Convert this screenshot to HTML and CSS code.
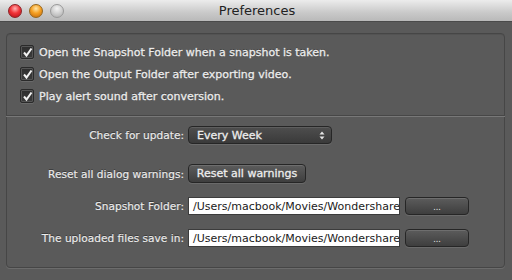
FILE: index.html
```html
<!DOCTYPE html>
<html lang="en">
<head>
  <meta charset="UTF-8">
  <title>Preferences</title>
  <link rel="stylesheet" href="styles.css">
</head>
<body>

<div class="window">
  <div class="titlebar">
    <div class="lights">
      <span class="light close"></span>
      <span class="light minimize"></span>
      <span class="light zoom"></span>
    </div>
    <div class="title">Preferences</div>
  </div>

  <div class="panel">
    <div class="checks">
      <label class="check-row">
        <span class="checkbox"><svg width="11" height="11" viewBox="0 0 11 11"><path d="M2 5.5 L4.5 8.5 L9.5 1.5" fill="none" stroke="#f2f2f2" stroke-width="2"/></svg></span>
        Open the Snapshot Folder when a snapshot is taken.
      </label>
      <label class="check-row">
        <span class="checkbox"><svg width="11" height="11" viewBox="0 0 11 11"><path d="M2 5.5 L4.5 8.5 L9.5 1.5" fill="none" stroke="#f2f2f2" stroke-width="2"/></svg></span>
        Open the Output Folder after exporting video.
      </label>
      <label class="check-row">
        <span class="checkbox"><svg width="11" height="11" viewBox="0 0 11 11"><path d="M2 5.5 L4.5 8.5 L9.5 1.5" fill="none" stroke="#f2f2f2" stroke-width="2"/></svg></span>
        Play alert sound after conversion.
      </label>
    </div>

    <div class="separator"></div>

    <div class="form">
      <div class="form-row row-update">
        <span class="label">Check for update:</span>
        <div class="select">
          <span>Every Week</span>
          <svg class="arrows" width="6" height="9" viewBox="0 0 6 9">
            <path d="M0.5 3.5 L3 0.5 L5.5 3.5 Z M0.5 5.5 L3 8.5 L5.5 5.5 Z" fill="#e6e6e6"/>
          </svg>
        </div>
      </div>

      <div class="form-row row-reset">
        <span class="label">Reset all dialog warnings:</span>
        <button class="btn reset-btn">Reset all warnings</button>
      </div>

      <div class="form-row row-path">
        <span class="label">Snapshot Folder:</span>
        <div class="path-input">/Users/macbook/Movies/Wondershare</div>
        <button class="btn browse-btn">...</button>
      </div>

      <div class="form-row row-path">
        <span class="label">The uploaded files save in:</span>
        <div class="path-input">/Users/macbook/Movies/Wondershare</div>
        <button class="btn browse-btn">...</button>
      </div>
    </div>
  </div>
</div>

</body>
</html>
```

FILE: styles.css
```css
body {
  margin: 0;
  background-color: #5a5a5a;
  font-family: 'DejaVu Sans', 'Noto Sans', sans-serif;
  overflow: hidden;
}

.window {
  width: 512px;
  height: 280px;
  background-color: #5a5a5a;
}

/* title bar */
.titlebar {
  height: 21px;
  position: relative;
  background: linear-gradient(#ececec, #c9c9c9 60%, #b9b9b9);
  border-bottom: 1px solid #4a4a4a;
  display: flex;
  align-items: center;
  justify-content: center;
}

.lights {
  position: absolute;
  left: 8px;
  top: 4px;
  display: flex;
  gap: 7px;
}

.light {
  width: 14px;
  height: 14px;
  border-radius: 50%;
  box-sizing: border-box;
}

.close {
  background: radial-gradient(circle at 50% 30%, #ffb3b3 0, #f2353a 45%, #b10d14 100%);
  border: 1px solid #8d2226;
}

.minimize {
  background: radial-gradient(circle at 50% 30%, #ffe6a8 0, #f6a123 45%, #c0650a 100%);
  border: 1px solid #95661c;
}

.zoom {
  background: radial-gradient(circle at 50% 30%, #f4f4f4 0, #cfcfcf 50%, #a9a9a9 100%);
  border: 1px solid #9a9a9a;
}

.title {
  font-size: 13px;
  color: #222;
  margin-left: 2px;
}

/* main panel */
.panel {
  margin: 11px 7px 0 6px;
  height: 235px;
  box-sizing: border-box;
  border: 1px solid #464646;
  border-radius: 4px;
  box-shadow: 0 1px 0 #6c6c6c, inset 0 1px 0 #535353;
}

.checks {
  padding: 7px 0 8px 13px;
}

.check-row {
  display: flex;
  align-items: center;
  height: 22px;
  font-size: 11px;
  color: #ececec;
  -webkit-text-stroke: 0.3px #ececec;
  text-shadow: 0 -1px 0 #3a3a3a;
}

.checkbox {
  width: 14px;
  height: 14px;
  box-sizing: border-box;
  margin-right: 5px;
  border: 1px solid #2a2a2a;
  border-radius: 2px;
  background: linear-gradient(#2e2e2e, #3c3c3c);
  box-shadow: 0 1px 0 #6a6a6a, inset 0 0 0 1px #555;
  display: flex;
  align-items: center;
  justify-content: center;
}

.separator {
  height: 0;
  margin: 0 -1px;
  border-top: 1px solid #474747;
  border-bottom: 1px solid #787878;
}

/* form rows */
.form {
  padding-top: 9px;
  display: flex;
  flex-direction: column;
}

.form-row {
  display: flex;
  align-items: center;
  gap: 4px;
}

.row-reset {
  margin-top: 20px;
}

.row-path {
  margin-top: 14px;
}

.label {
  width: 177px;
  text-align: right;
  font-size: 10.6px;
  color: #ececec;
  -webkit-text-stroke: 0.15px #ececec;
  text-shadow: 0 -1px 0 #3a3a3a;
}

.select {
  width: 144px;
  height: 18px;
  box-sizing: border-box;
  display: flex;
  align-items: center;
  justify-content: space-between;
  padding: 0 6px 0 8px;
  border: 1px solid #262626;
  border-radius: 4px;
  background: linear-gradient(#4e4e4e, #3a3a3a);
  box-shadow: 0 1px 0 #6a6a6a, inset 0 1px 0 #5e5e5e;
  font-size: 11px;
  color: #ececec;
  -webkit-text-stroke: 0.3px #ececec;
}

.btn {
  height: 19px;
  box-sizing: border-box;
  border: 1px solid #262626;
  border-radius: 4px;
  background: linear-gradient(#5c5c5c, #3e3e3e);
  box-shadow: 0 1px 0 #6a6a6a, inset 0 1px 0 #6e6e6e;
  font-family: inherit;
  font-size: 11px;
  color: #ededed;
  -webkit-text-stroke: 0.3px #ededed;
  padding: 0;
}

.reset-btn {
  width: 118px;
}

.browse-btn {
  width: 64px;
  height: 18px;
  margin-left: 1px;
  font-size: 8px;
  line-height: 10px;
  padding-top: 4px;
  -webkit-text-stroke: 0;
}

.path-input {
  width: 212px;
  height: 18px;
  box-sizing: border-box;
  padding-left: 4px;
  background-color: #fff;
  border: 1px solid #3c3c3c;
  color: #1a1a1a;
  font-size: 11px;
  line-height: 17px;
  white-space: nowrap;
  overflow: hidden;
}
```
